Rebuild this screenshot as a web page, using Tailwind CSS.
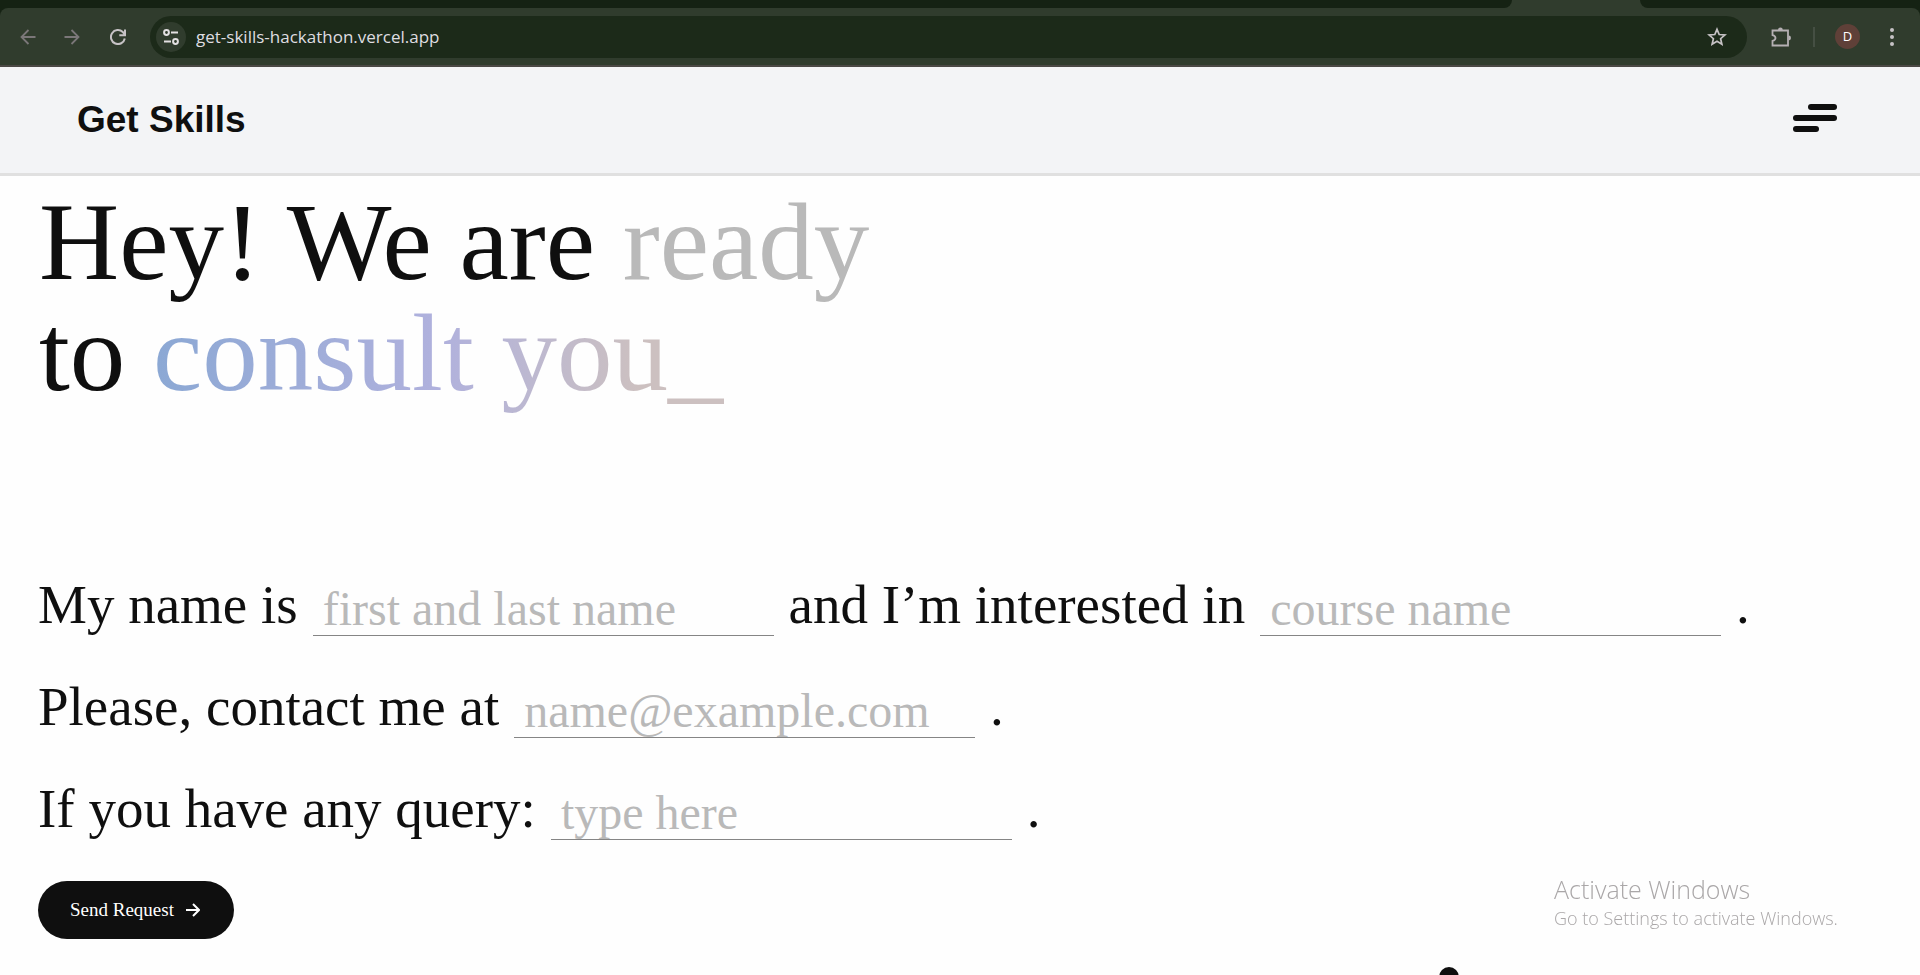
<!DOCTYPE html>
<html lang="en">

<head>
    <meta charset="UTF-8">
    <meta name="viewport" content="width=device-width, initial-scale=1.0">
    <title>Get Skills</title>
    <script src="https://cdn.jsdelivr.net/npm/@tailwindcss/browser@4"></script>
</head>

<body class="min-h-screen bg-[#fefefe] text-[#0f0f0f] font-['Liberation_Serif',serif]">
    <!-- Browser bar -->
    <div class="bg-[#152213] font-['Open_Sans',sans-serif]">
        <!-- Tab strip -->
        <div class="flex h-2 bg-[#303c2d]">
            <div class="grow bg-[#152213] rounded-br-lg"></div>
            <div class="w-32"></div>
            <div class="w-[280px] bg-[#152213] rounded-bl-lg"></div>
        </div>
        <div class="flex items-center h-[59px] px-4 bg-[#303c2d] rounded-t-lg border-b-2 border-[#4a4844]">
            <button class="w-6 flex justify-center" aria-label="Back">
                <svg class="size-4" viewBox="0 0 16 16" fill="none" stroke="#7b7779" stroke-width="1.8"><path d="M15.5 8H1.5M8.5 1L1.5 8l7 7"/></svg>
            </button>
            <button class="w-6 ml-5 flex justify-center" aria-label="Forward">
                <svg class="size-4" viewBox="0 0 16 16" fill="none" stroke="#7b7779" stroke-width="1.8"><path d="M.5 8h14M7.5 1l7 7-7 7"/></svg>
            </button>
            <button class="w-6 ml-[22px] flex justify-center" aria-label="Reload">
                <svg class="size-4" viewBox="0 0 16 16" fill="none" stroke="#c6c2c5" stroke-width="2"><path d="M14.8 9.5A7 7 0 1 1 12.8 3L15 5.5M15 .5v5.7H9.3"/></svg>
            </button>
            <div class="flex items-center grow h-[42px] ml-5 pl-1.5 pr-5 bg-[#1c2a19] rounded-full">
                <button class="size-[30px] flex items-center justify-center rounded-full bg-[#303c2d]" aria-label="Site information">
                    <svg class="size-4" viewBox="0 0 16 16" fill="none" stroke="#e3e0e2" stroke-width="2"><circle cx="3.5" cy="3.5" r="2.4"/><path d="M8 3.5h7M1 12.5h7"/><circle cx="12.5" cy="12.5" r="2.4"/></svg>
                </button>
                <input type="text" class="grow ml-2.5 text-[17px] text-[#dfdde0] outline-none" value="get-skills-hackathon.vercel.app" aria-label="Address">
                <button aria-label="Bookmark">
                    <svg class="size-5" viewBox="0 0 20 20" fill="none" stroke="#c6c2c5" stroke-width="1.7"><path d="M10 2.3l2.2 5.2 5.7.5-4.3 3.7 1.3 5.6-4.9-3-4.9 3 1.3-5.6L2.1 8l5.7-.5z"/></svg>
                </button>
            </div>
            <button class="ml-6" aria-label="Extensions">
                <svg class="size-5" viewBox="0 0 20 20" fill="none" stroke="#b5b0b3" stroke-width="1.8"><path d="M1.5 3.5H17v15H1.5v-4.6c4-1 4-4.8 0-5.800z"/><path d="M7 2.9a2.4 2.4 0 0 1 4.8 0zM17.6 8.600a2.300 2.300 0 0 1 0 4.800z" fill="#b5b0b3" stroke="none"/></svg>
            </button>
            <div class="w-0.5 h-5 ml-[22px] bg-[#454f43]"></div>
            <button class="size-[25px] ml-5 rounded-full bg-[#5f4038] text-[13px] text-white" aria-label="Profile">D</button>
            <button class="w-6 ml-5 flex justify-center" aria-label="Menu">
                <svg class="h-[18px] w-1" viewBox="0 0 4 18" fill="#c6c2c5"><circle cx="2" cy="2" r="2"/><circle cx="2" cy="9" r="2"/><circle cx="2" cy="16" r="2"/></svg>
            </button>
        </div>
    </div>

    <!-- Header -->
    <header class="flex items-center justify-between h-[109px] pl-[77px] pr-[83px] bg-[#f3f4f6] border-b-[3px] border-[#e0e0e0]">
        <a href="#" class="text-[37px] leading-10 font-bold font-['Liberation_Sans',sans-serif]">Get Skills</a>
        <button class="pb-1" aria-label="Open menu">
            <svg class="w-11 h-7" viewBox="0 0 44 28" fill="#0f0f0f"><rect x="15" width="29" height="6" rx="3"/><rect y="11" width="44" height="6" rx="3"/><rect y="22" width="26" height="6" rx="3"/></svg>
        </button>
    </header>

    <main class="px-[38px] pt-[10px]">
        <h1 class="pl-px text-[111px] leading-[111px]">
            Hey! We are <span class="text-[#b9b9b9]">ready</span><br>
            to <span class="text-transparent bg-clip-text bg-linear-to-r from-[#8ba8d4] via-[#b0b1dd] via-50% to-[#ccc0c0] to-85%">consult you_</span>
        </h1>

        <!-- Contact form -->
        <form class="mt-[146px] text-[55px] leading-[102px]">
            <div class="flex flex-wrap items-center gap-x-[15px]">
                <label for="fullName">My name is</label>
                <input type="text" id="fullName" placeholder="first and last name" class="w-[24vw] px-2.5 pt-2 text-5xl/[53px] border-b border-[#858585] placeholder:text-[#b9b9b9] outline-none">
                <label for="course">and I’m interested in</label>
                <input type="text" id="course" placeholder="course name" class="w-[24vw] px-2.5 pt-2 text-5xl/[53px] border-b border-[#858585] placeholder:text-[#b9b9b9] outline-none">
                <span>.</span>
            </div>
            <div class="flex flex-wrap items-center gap-x-[15px]">
                <label for="email">Please, contact me at</label>
                <input type="email" id="email" placeholder="name@example.com" class="w-[24vw] px-2.5 pt-2 text-5xl/[53px] border-b border-[#858585] placeholder:text-[#b9b9b9] outline-none">
                <span>.</span>
            </div>
            <div class="flex flex-wrap items-center gap-x-[15px]">
                <label for="query">If you have any query:</label>
                <input type="text" id="query" placeholder="type here" class="w-[24vw] px-2.5 pt-2 text-5xl/[53px] border-b border-[#858585] placeholder:text-[#b9b9b9] outline-none">
                <span>.</span>
            </div>
            <button type="submit" class="flex items-center gap-3 h-[58px] mt-[21px] pl-8 pr-[34px] rounded-full bg-[#0f0f0f] text-[19px] leading-6 text-white">
                Send Request
                <svg class="size-3.5" viewBox="0 0 14 14" fill="none" stroke="#fff" stroke-width="2"><path d="M0 7h12.5M7 1l6 6-6 6"/></svg>
            </button>
        </form>
    </main>

    <!-- Cursor follower -->
    <div class="fixed left-[1439px] -bottom-3 size-5 rounded-full bg-[#0f0f0f]"></div>

    <!-- Windows activation notice -->
    <div class="fixed right-20 bottom-11 w-[286px] text-[#aaa7a8] font-['Open_Sans',sans-serif] font-light">
        <p class="text-[25px] leading-8">Activate Windows</p>
        <p class="text-[18px] leading-[26px] whitespace-nowrap">Go to Settings to activate Windows.</p>
    </div>
</body>

</html>
